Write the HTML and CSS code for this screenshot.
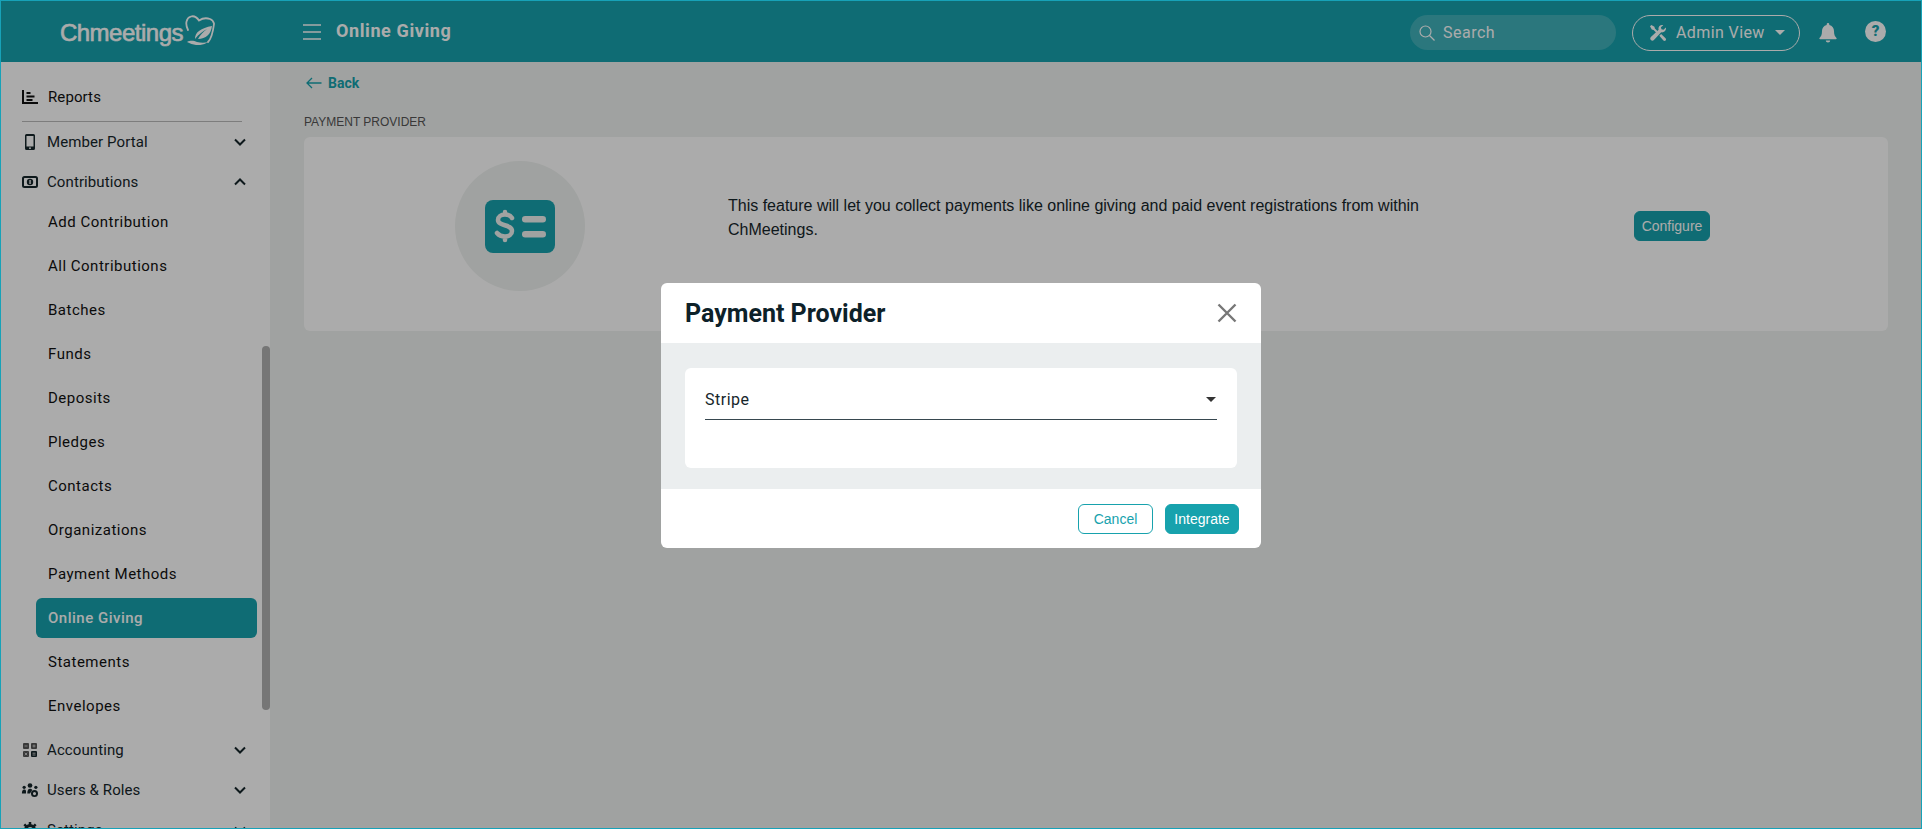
FILE: index.html
```html
<!DOCTYPE html>
<html lang="en">
<head>
    <meta charset="UTF-8">
    <meta name="viewport" content="width=device-width, initial-scale=1.0">
    <title>Online Giving</title>
    <link rel="stylesheet" href="styles.css">
</head>
<body>

    <!-- Top bar -->
    <header class="topbar">
        <div class="logo">
            <span class="logo-text">Chmeetings</span>
            <svg class="logo-mark" viewBox="0 0 30 30" width="30" height="30">
                <path d="M3 15C0 9 1 3 6 1.500c3-.8 6 1 8 4 3-2 7-3 11-1.500 2 .8 3.500 2.500 4 4.500M29 9C28 17 27 23 23 27" fill="none" stroke="#fff" stroke-width="1.800" stroke-linecap="round"/>
                <path d="M2 27c4-2 7-1 10 0 4 1 8 1 11 0-3 2.500-8 3.500-12 3-3-.4-6-1.500-9-3z" fill="#fff"/>
                <path d="M10 24c0-7 6-11 17-13-1 8-6 13-14 13 2-4 5-7 9-10-4 2-8 5-12 10z" fill="#fff"/>
            </svg>
        </div>
        <div class="topbar-main">
            <svg class="menu-icon" viewBox="0 0 18 16" width="18" height="16">
                <path d="M0 1h18M0 8h18M0 15h18" stroke="#fff" stroke-width="1.500"/>
            </svg>
            <span class="page-title">Online Giving</span>
        </div>
        <div class="topbar-right">
            <div class="search">
                <svg viewBox="0 0 16 16" width="16" height="16">
                    <circle cx="6.500" cy="6.500" r="5.500" fill="none" stroke="#fff" stroke-width="1.200"/>
                    <path d="M10.500 10.500L15.500 15.500" stroke="#fff" stroke-width="1.200"/>
                </svg>
                <span>Search</span>
            </div>
            <div class="admin-view">
                <svg viewBox="0 0 18 18" width="16" height="16">
                    <path d="M1.500 0L5 2l.5 2L9.500 8 8 9.500 4 5.500 2 5 0 1.500z" fill="#fff"/>
                    <path d="M13.500 0c-2.200 0-4 1.800-4 4 0 .5.100.9.200 1.300L1 13.500c-1 1-1 2.400 0 3.400s2.400 1 3.400 0l8.200-8.700c.3.100.6.100.9.100 2.400 0 4.500-2 4.500-4.300 0-.5 0-.9-.2-1.300l-2.600 2.600-2.300-.6-.6-2.300L14.900.2C14.500.1 14 0 13.500 0z" fill="#fff"/>
                    <path d="M10.500 12l2-2 5 5c.7.700.7 1.700 0 2.400-.7.700-1.700.700-2.400 0z" fill="#fff"/>
                </svg>
                <span>Admin View</span>
                <i class="caret"></i>
            </div>
            <svg class="bell" viewBox="0 0 18 20" width="18" height="20">
                <path d="M9 0c-.8 0-1.300.6-1.300 1.300v.8C4.700 2.700 3 5.200 3 8c0 4-1 5.500-2.500 7-.4.5-.1 1.200.6 1.200h15.800c.7 0 1-.7.6-1.200C16 13.500 15 12 15 8c0-2.800-1.700-5.300-4.700-5.900v-.8C10.300.6 9.800 0 9 0z" fill="#fff"/>
                <path d="M6.800 17.500h4.400c0 1.200-1 2-2.200 2s-2.200-.8-2.200-2z" fill="#fff"/>
            </svg>
            <div class="help">?</div>
        </div>
    </header>

    <div class="layout">
        <!-- Sidebar -->
        <nav class="sidebar">
            <div class="nav-row nav-reports">
                <svg viewBox="0 0 16 14" width="16" height="14">
                    <path d="M1 0v13h15" fill="none" stroke="#111" stroke-width="2"/>
                    <path d="M4.500 3h4M4.500 6.500h8M4.500 10h6" stroke="#111" stroke-width="1.800"/>
                </svg>
                <span>Reports</span>
            </div>
            <div class="nav-divider"></div>
            <div class="nav-row">
                <svg viewBox="0 0 16 16" width="16" height="16">
                    <path d="M4.500 0h7A1.500 1.500 0 0 1 13 1.500v13a1.500 1.500 0 0 1-1.500 1.500h-7A1.500 1.500 0 0 1 3 14.500v-13A1.500 1.500 0 0 1 4.500 0zM4.500 2v10.500h7V2zM8 13.300a.9.9 0 1 0 0 1.800.9.9 0 0 0 0-1.800z" fill="#16262b" fill-rule="evenodd"/>
                </svg>
                <span>Member Portal</span>
                <svg class="chev" viewBox="0 0 12 8" width="12" height="8"><path d="M1 1.500l5 5 5-5" fill="none" stroke="#16262b" stroke-width="2"/></svg>
            </div>
            <div class="nav-row">
                <svg viewBox="0 0 16 12" width="16" height="12">
                    <rect x="1" y="1" width="14" height="10" rx="1.500" fill="none" stroke="#16262b" stroke-width="2"/>
                    <circle cx="8" cy="6" r="3.200" fill="#16262b"/>
                    <rect x="7.400" y="4" width="1.300" height="4" fill="#fff"/>
                </svg>
                <span>Contributions</span>
                <svg class="chev" viewBox="0 0 12 8" width="12" height="8"><path d="M1 6.500l5-5 5 5" fill="none" stroke="#16262b" stroke-width="2"/></svg>
            </div>
            <ul class="subnav">
                <li>Add Contribution</li>
                <li>All Contributions</li>
                <li>Batches</li>
                <li>Funds</li>
                <li>Deposits</li>
                <li>Pledges</li>
                <li>Contacts</li>
                <li>Organizations</li>
                <li>Payment Methods</li>
                <li class="active">Online Giving</li>
                <li>Statements</li>
                <li>Envelopes</li>
            </ul>
            <div class="nav-row">
                <svg viewBox="0 0 16 16" width="16" height="16">
                    <rect x="1" y="1" width="6" height="6" rx="1" fill="#555"/>
                    <rect x="9" y="1" width="6" height="6" rx="1" fill="#555"/>
                    <rect x="1" y="9" width="6" height="6" rx="1" fill="#555"/>
                    <rect x="9" y="9" width="6" height="6" rx="1" fill="#16262b"/>
                    <path d="M2.500 4h3M10.500 4h3M12 2.500v3M2.800 10.800l2.400 2.400M5.200 10.800l-2.400 2.400M10.500 11.200h3M10.500 13h3" stroke="#ccc" stroke-width=".9"/>
                </svg>
                <span>Accounting</span>
                <svg class="chev" viewBox="0 0 12 8" width="12" height="8"><path d="M1 1.500l5 5 5-5" fill="none" stroke="#16262b" stroke-width="2"/></svg>
            </div>
            <div class="nav-row">
                <svg viewBox="0 0 20 16" width="20" height="16">
                    <circle cx="10" cy="3" r="2.600" fill="#16262b"/>
                    <circle cx="3.500" cy="5" r="1.800" fill="#16262b"/>
                    <circle cx="16.500" cy="5" r="1.800" fill="#16262b"/>
                    <path d="M1 12c0-3 1-4.500 2.500-4.500S6 8 5.500 12zM7 12c0-4 1-5.500 3-5.500 1 0 2 .5 2.500 1.500L10 12z" fill="#16262b"/>
                    <circle cx="15" cy="12" r="2.800" fill="none" stroke="#16262b" stroke-width="2.200"/>
                </svg>
                <span>Users &amp; Roles</span>
                <svg class="chev" viewBox="0 0 12 8" width="12" height="8"><path d="M1 1.500l5 5 5-5" fill="none" stroke="#16262b" stroke-width="2"/></svg>
            </div>
            <div class="nav-row">
                <svg viewBox="0 0 16 16" width="16" height="16">
                    <circle cx="8" cy="8" r="4.500" fill="none" stroke="#16262b" stroke-width="3"/>
                    <path d="M8 0v3M8 13v3M0 8h3M13 8h3M2.300 2.300l2 2M11.700 11.700l2 2M13.700 2.300l-2 2M4.300 11.700l-2 2" stroke="#16262b" stroke-width="2.500"/>
                </svg>
                <span>Settings</span>
                <svg class="chev" viewBox="0 0 12 8" width="12" height="8"><path d="M1 1.500l5 5 5-5" fill="none" stroke="#16262b" stroke-width="2"/></svg>
            </div>
            <div class="scroll-thumb"></div>
        </nav>

        <!-- Main content -->
        <main class="content">
            <a class="back-link">
                <svg viewBox="0 0 16 12" width="16" height="12">
                    <path d="M15.500 6H1M6 1L1 6l5 5" fill="none" stroke="#17a2ad" stroke-width="1.300"/>
                </svg>
                <span>Back</span>
            </a>
            <div class="section-label">PAYMENT PROVIDER</div>
            <section class="provider-card">
                <div class="icon-circle">
                    <svg viewBox="0 0 70 53" width="70" height="53">
                        <rect x="0" y="0" width="70" height="53" rx="8" fill="#17a2ad"/>
                        <path d="M27 18c-1.500-2.500-4-3.500-7-3.500-4 0-7 2-7 5.500 0 6.500 14 4 14 11 0 3.500-3 5.500-7 5.500-3 0-6-1-8-3.500M20 12v2.500M20 37v3" fill="none" stroke="#eff2f0" stroke-width="4.500" stroke-linecap="round"/>
                        <rect x="37" y="16" width="24" height="6.500" rx="3.200" fill="#eff2f0"/>
                        <rect x="37" y="31" width="24" height="6.500" rx="3.200" fill="#eff2f0"/>
                    </svg>
                </div>
                <p class="provider-text">This feature will let you collect payments like online giving and paid event registrations from within ChMeetings.</p>
                <button class="btn btn-primary btn-configure">Configure</button>
            </section>
        </main>
    </div>

    <!-- Modal -->
    <div class="overlay">
        <div class="modal">
            <div class="modal-header">
                <h2>Payment Provider</h2>
                <svg viewBox="0 0 20 20" width="20" height="20">
                    <path d="M1.500 1.500l17 17M18.500 1.500l-17 17" stroke="#777" stroke-width="2.400"/>
                </svg>
            </div>
            <div class="modal-body">
                <div class="modal-card">
                    <div class="select-field">
                        <span>Stripe</span>
                        <i class="caret caret-dark"></i>
                    </div>
                </div>
            </div>
            <div class="modal-footer">
                <button class="btn btn-outline">Cancel</button>
                <button class="btn btn-primary btn-integrate">Integrate</button>
            </div>
        </div>
    </div>

</body>
</html>
```

FILE: styles.css
```css
/* General Styles */
html, body {
    margin: 0;
    padding: 0;
    height: 100%;
    overflow: hidden;
}

body {
    position: relative;
    box-sizing: border-box;
    height: 829px;
    border: 1px solid #17a2b8;
    font-family: Roboto, Arial, sans-serif;
    color: #16262b;
    background-color: #eff2f0;
}

/* Top bar */
.topbar {
    display: flex;
    align-items: center;
    height: 61px;
    background-color: #17a2ad;
    color: #fff;
}

.logo {
    display: flex;
    align-items: center;
    justify-content: flex-end;
    width: 214px;
    flex-shrink: 0;
}

.logo-text {
    font-family: "Liberation Sans", Arial, sans-serif;
    font-size: 24px;
    letter-spacing: -0.5px;
    -webkit-text-stroke: 0.6px #fff;
    margin-top: 3px;
}

.logo-mark {
    margin-left: 2px;
    margin-top: -4px;
}

.topbar-main {
    display: flex;
    align-items: center;
    gap: 15px;
    margin-left: 88px;
    flex: 1;
}

.page-title {
    font-size: 18px;
    font-weight: 700;
    letter-spacing: 0.6px;
    margin-bottom: 2px;
}

.topbar-right {
    display: flex;
    align-items: center;
    padding-right: 35px;
    margin-top: 2px;
}

.search {
    display: flex;
    align-items: center;
    gap: 8px;
    box-sizing: border-box;
    width: 206px;
    height: 35px;
    padding-left: 9px;
    border-radius: 18px;
    background-color: rgba(255, 255, 255, 0.18);
    font-size: 16px;
    letter-spacing: 0.5px;
}

.admin-view {
    display: flex;
    align-items: center;
    gap: 10px;
    box-sizing: border-box;
    width: 168px;
    height: 36px;
    margin-left: 16px;
    padding-left: 17px;
    border: 1px solid #fff;
    border-radius: 18px;
    font-size: 16px;
    letter-spacing: 0.4px;
}

.caret {
    display: inline-block;
    width: 0;
    height: 0;
    border-left: 5px solid transparent;
    border-right: 5px solid transparent;
    border-top: 5px solid #fff;
}

.bell {
    margin-left: 19px;
}

.help {
    width: 21px;
    height: 21px;
    margin-left: 28px;
    margin-bottom: 3px;
    border-radius: 50%;
    background-color: #fff;
    color: #17a2ad;
    font-size: 15px;
    font-weight: 900;
    line-height: 21px;
    text-align: center;
}

/* Layout */
.layout {
    display: flex;
    height: 766px;
    overflow: hidden;
}

/* Sidebar */
.sidebar {
    position: relative;
    box-sizing: border-box;
    width: 269px;
    flex-shrink: 0;
    padding-top: 13px;
    background-color: #fff;
    overflow: hidden;
}

.nav-row {
    display: flex;
    align-items: center;
    height: 40px;
    padding-left: 20px;
    font-size: 15px;
    letter-spacing: 0.1px;
}

.nav-row svg:first-child {
    width: 18px;
    margin-right: 8px;
    flex-shrink: 0;
}

.nav-row .chev {
    margin-left: auto;
    margin-right: 24px;
}

.nav-reports {
    height: 44px;
    color: #111;
}

.nav-reports span {
    margin-left: 1px;
}

.nav-divider {
    height: 1px;
    margin: 2px 28px 0 21px;
    background-color: #bbb;
}

.subnav {
    display: flex;
    flex-direction: column;
    gap: 4px;
    list-style: none;
    margin: 0 13px 4px 35px;
    padding: 0;
}

.subnav li {
    box-sizing: border-box;
    height: 40px;
    padding-left: 12px;
    border-radius: 6px;
    color: #111;
    font-size: 15px;
    letter-spacing: 0.5px;
    line-height: 40px;
}

.subnav li.active {
    background-color: #17a2ad;
    color: #fff;
    font-weight: 500;
}

.scroll-thumb {
    position: absolute;
    top: 284px;
    right: 0;
    width: 8px;
    height: 364px;
    border-radius: 4px;
    background-color: #b0b0b0;
}

/* Main content */
.content {
    flex: 1;
    padding: 0 33px 0 34px;
}

.back-link {
    display: flex;
    align-items: center;
    gap: 6px;
    height: 40px;
    margin-top: 1px;
    margin-left: 2px;
    color: #17a2ad;
    font-size: 14px;
    font-weight: 700;
}

.section-label {
    margin-top: 12px;
    margin-bottom: 8px;
    color: #555;
    font-family: "Liberation Sans", Arial, sans-serif;
    font-size: 12px;
    line-height: 14px;
}

.provider-card {
    display: flex;
    align-items: flex-start;
    box-sizing: border-box;
    height: 194px;
    padding-top: 24px;
    border-radius: 6px;
    background-color: #fff;
}

.icon-circle {
    display: flex;
    align-items: center;
    justify-content: center;
    width: 130px;
    height: 130px;
    margin-left: 151px;
    border-radius: 50%;
    background-color: #eff2f0;
}

.provider-text {
    width: 700px;
    margin: 33px 0 0 143px;
    color: #16262b;
    font-family: "Liberation Sans", Arial, sans-serif;
    font-size: 16px;
    line-height: 24px;
}

.btn {
    box-sizing: border-box;
    height: 30px;
    padding: 0;
    border-radius: 6px;
    font-family: "Liberation Sans", Arial, sans-serif;
    font-size: 14px;
}

.btn-primary {
    width: 75px;
    border: 1px solid #17a2ad;
    background-color: #17a2ad;
    color: #fff;
}

.btn-outline {
    width: 75px;
    border: 1px solid #17a2ad;
    background-color: #fff;
    color: #17a2ad;
}

.btn-integrate {
    width: 74px;
}

.btn-configure {
    width: 76px;
    margin-top: 50px;
    margin-left: 206px;
}

/* Modal */
.overlay {
    position: absolute;
    top: 0;
    left: 0;
    width: 100%;
    height: 100%;
    background-color: rgba(0, 0, 0, 0.33);
}

.modal {
    position: absolute;
    top: 282px;
    left: 660px;
    width: 600px;
    border-radius: 6px;
    overflow: hidden;
    background-color: #fff;
}

.modal-header {
    display: flex;
    align-items: center;
    justify-content: space-between;
    box-sizing: border-box;
    height: 60px;
    padding: 0 24px;
}

.modal-header h2 {
    margin: 0;
    color: #0d2129;
    font-size: 25px;
    font-weight: 700;
}

.modal-body {
    padding: 25px 24px 21px;
    background-color: #ebeeef;
}

.modal-card {
    box-sizing: border-box;
    height: 100px;
    padding: 0 20px;
    border-radius: 6px;
    background-color: #fff;
}

.select-field {
    display: flex;
    align-items: center;
    justify-content: space-between;
    box-sizing: border-box;
    height: 52px;
    padding-top: 12px;
    border-bottom: 1px solid #37474f;
    font-size: 16px;
    letter-spacing: 0.5px;
}

.caret-dark {
    border-top-color: #333;
    margin-right: 1px;
}

.modal-footer {
    display: flex;
    justify-content: flex-end;
    align-items: center;
    gap: 12px;
    height: 59px;
    padding-right: 22px;
}
```
